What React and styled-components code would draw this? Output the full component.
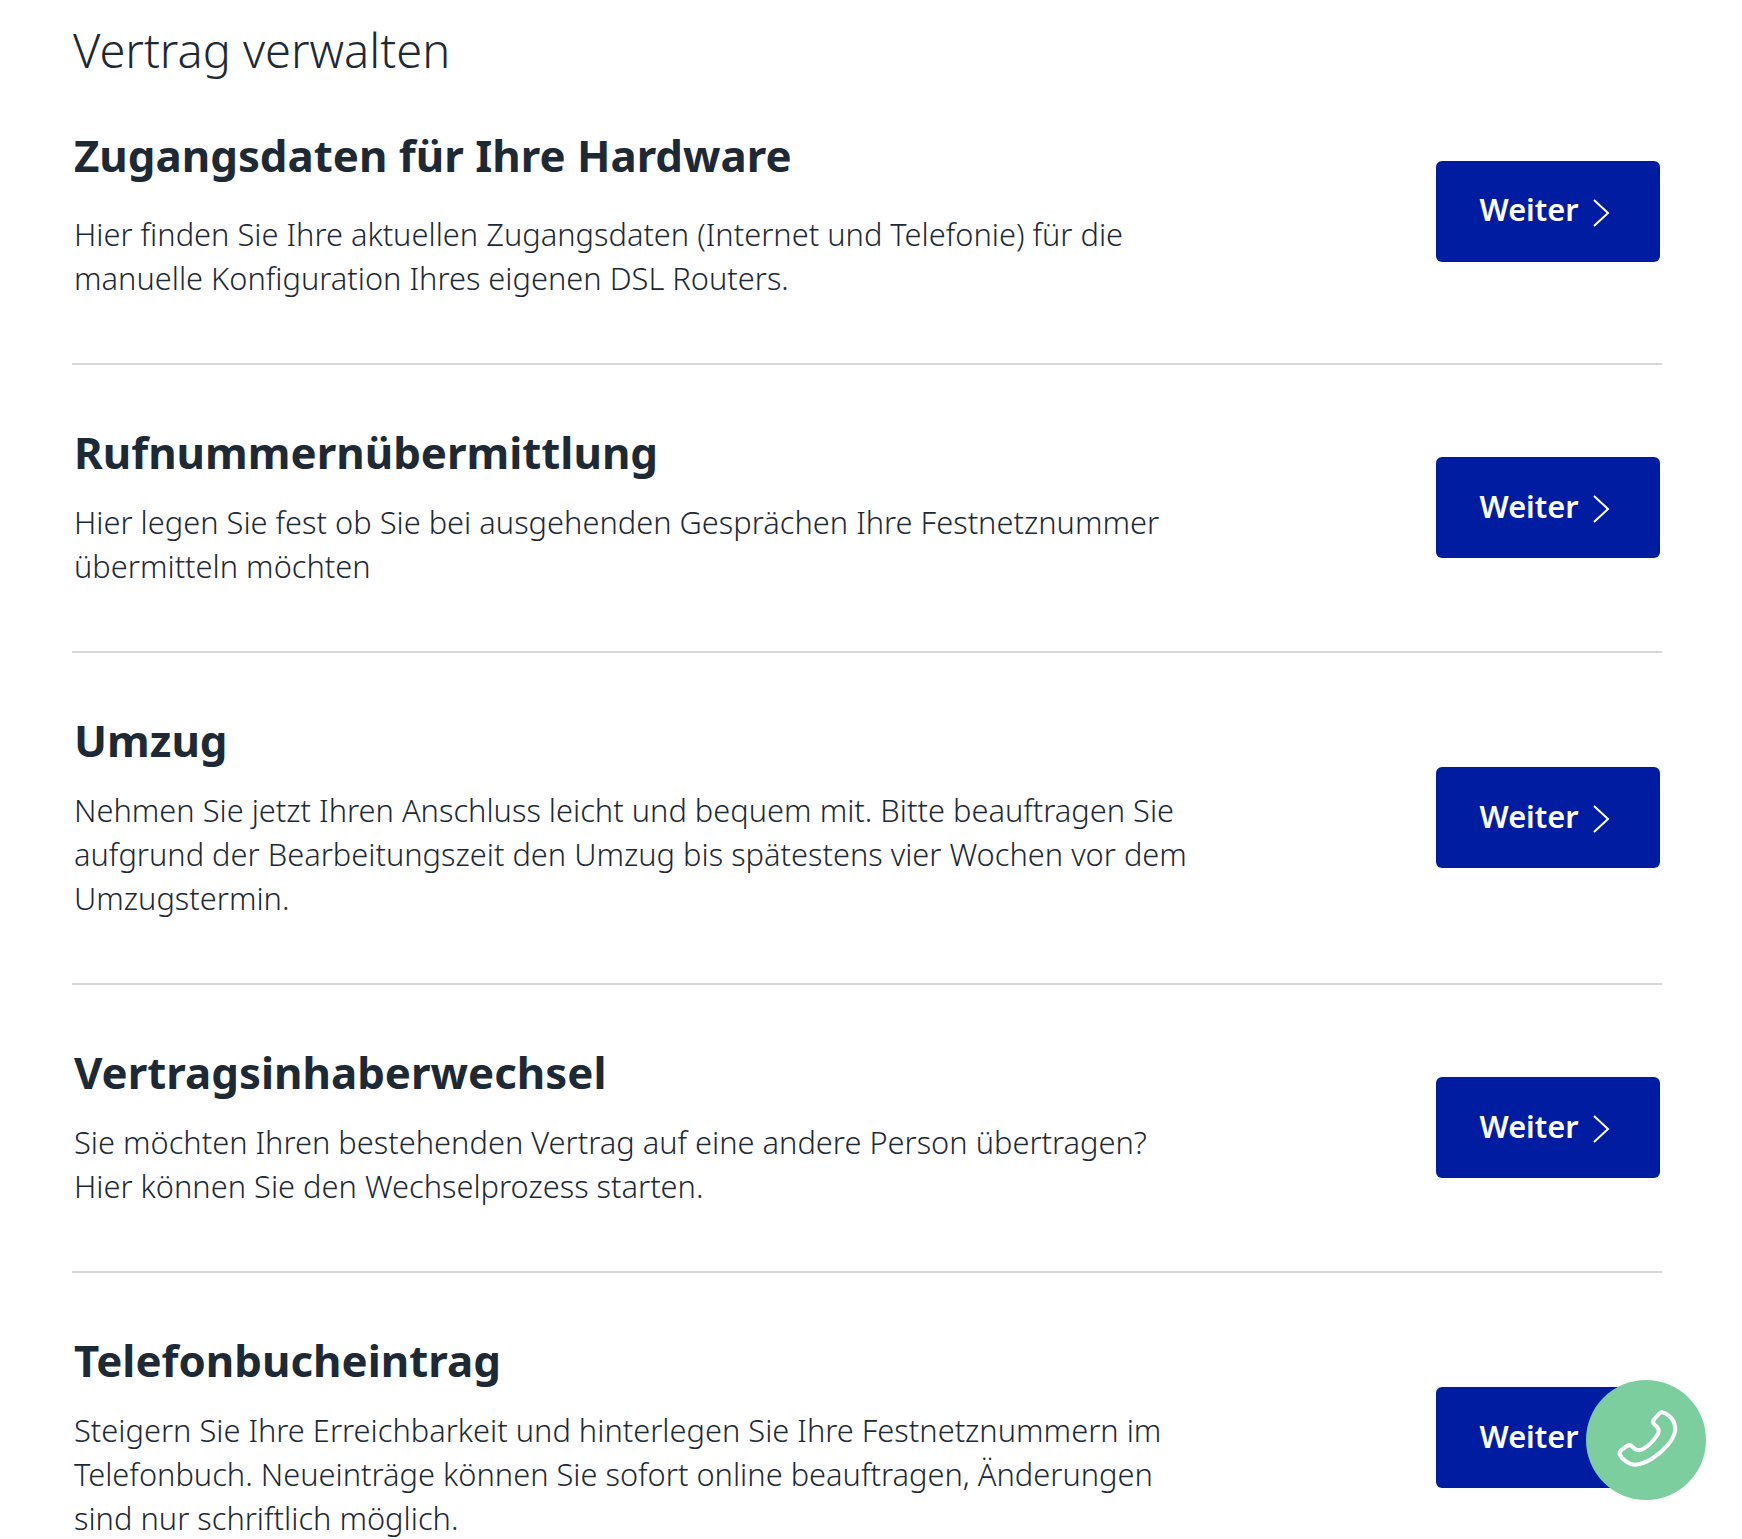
import React from 'react';
import styled, { createGlobalStyle } from 'styled-components';

const Global = createGlobalStyle`
  html, body { margin: 0; padding: 0; background: #fff; }
  body { font-family: "Noto Sans", "Open Sans", sans-serif; color: #1d2a35; }
`;
const Page = styled.div`
  position: relative;
  height: 1539px;
  overflow: hidden;
  padding: 0 80px 0 72px;
`;
const Title = styled.h1`
  margin: 0;
  padding: 20px 0 0 1px;
  height: 60px;
  font-size: 47px;
  line-height: 60px;
  font-weight: 300;
  color: #1d2a35;
`;
const Row = styled.section`
  display: flex;
  align-items: center;
  justify-content: space-between;
  border-bottom: 2px solid #d6d6d6;
  &:last-of-type { border-bottom: none; }
`;
const Text = styled.div`
  padding: ${p => (p.$first ? '47px' : '59px')} 0 63px 2px;
  width: 1200px;
`;
const Heading = styled.h2`
  margin: 0 0 ${p => (p.$first ? '29px' : '20px')};
  font-size: 43.8px;
  line-height: 56px;
  font-weight: 700;
  color: #1d2a35;
`;
const Body = styled.p`
  margin: 0;
  font-size: 30.8px;
  line-height: 44px;
  font-weight: 300;
  color: #1d2a35;
`;
const Button = styled.button`
  flex: none;
  width: 224px;
  height: 101px;
  margin: 0 2px ${p => (p.$first ? '21px' : '1px')} 0;
  padding: 0 7px 4px 0;
  display: flex;
  align-items: center;
  justify-content: center;
  gap: 13px;
  border: none;
  border-radius: 6px;
  background: #001ca1;
  color: #fff;
  font-family: inherit;
  font-size: 30.7px;
  font-weight: 600;
`;
const ChevronIcon = styled.svg`
  margin-top: 7px;
`;
const CallBubble = styled.div`
  position: absolute;
  left: 1586px;
  top: 1380px;
  width: 120px;
  height: 120px;
  border-radius: 50%;
  background: #7dce9f;
  display: flex;
  align-items: center;
  justify-content: center;
`;

const Chevron = () => (
  <ChevronIcon width="18" height="30" viewBox="0 0 18 30" fill="none" stroke="#fff" strokeWidth="2">
    <path d="M2 2 L16 15 L2 28" />
  </ChevronIcon>
);
const Phone = () => (
  <svg width="90" height="90" viewBox="0 0 270 270" fill="none" stroke="#fff" strokeWidth="12" strokeLinejoin="round">
    <path d="M185 52 C195 55 210 65 217 78 C228 100 222 125 200 150 C175 180 135 208 100 209 C85 209 65 195 57 180 C54 174 56 170 60 166 L78 153 C84 149 90 150 94 155 L102 162 C108 167 115 167 124 163 C140 155 160 135 170 118 C174 110 174 103 170 98 L160 88 C155 83 155 77 160 72 L175 55 C178 52 182 51 185 52 Z" />
  </svg>
);

const items = [
  { t: 'Zugangsdaten für Ihre Hardware', b: ['Hier finden Sie Ihre aktuellen Zugangsdaten (Internet und Telefonie) für die', 'manuelle Konfiguration Ihres eigenen DSL Routers.'], first: true },
  { t: 'Rufnummernübermittlung', b: ['Hier legen Sie fest ob Sie bei ausgehenden Gesprächen Ihre Festnetznummer', 'übermitteln möchten'] },
  { t: 'Umzug', b: ['Nehmen Sie jetzt Ihren Anschluss leicht und bequem mit. Bitte beauftragen Sie', 'aufgrund der Bearbeitungszeit den Umzug bis spätestens vier Wochen vor dem', 'Umzugstermin.'] },
  { t: 'Vertragsinhaberwechsel', b: ['Sie möchten Ihren bestehenden Vertrag auf eine andere Person übertragen?', 'Hier können Sie den Wechselprozess starten.'] },
  { t: 'Telefonbucheintrag', b: ['Steigern Sie Ihre Erreichbarkeit und hinterlegen Sie Ihre Festnetznummern im', 'Telefonbuch. Neueinträge können Sie sofort online beauftragen, Änderungen', 'sind nur schriftlich möglich.'] },
];

export default function App() {
  return (
    <Page>
      <Global />
      <Title>Vertrag verwalten</Title>
      {items.map(it => (
        <Row key={it.t}>
          <Text $first={it.first}>
            <Heading $first={it.first}>{it.t}</Heading>
            <Body>{it.b.map((l, i) => <React.Fragment key={i}>{l}{i < it.b.length - 1 && <br />}</React.Fragment>)}</Body>
          </Text>
          <Button $first={it.first}>Weiter <Chevron /></Button>
        </Row>
      ))}
      <CallBubble><Phone /></CallBubble>
    </Page>
  );
}
